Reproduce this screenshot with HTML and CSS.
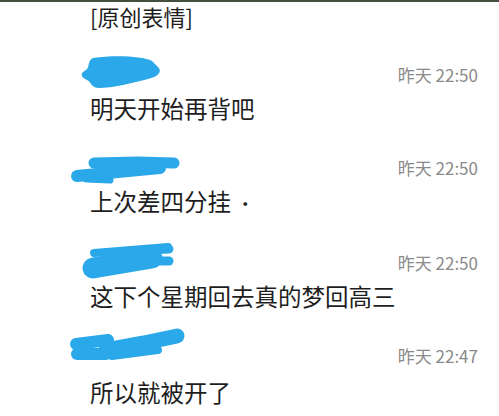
FILE: index.html
```html
<!DOCTYPE html>
<html lang="zh-CN">
<head>
    <meta charset="UTF-8">
    <meta name="viewport" content="width=device-width, initial-scale=1.0">
    <title>消息</title>
    <link rel="stylesheet" href="styles.css">
</head>
<body>
    <div class="screen">
        <div class="last-msg">[原创表情]</div>
        <ul class="chat-list">
            <li class="chat-item">
                <div class="chat-head">
                    <svg class="name-mask" viewBox="0 0 120 40" width="120" height="40">
                        <path d="M25,4 C45,1 75,2 84,7 L90,13 C95,18 89,23 80,25 C65,29 45,34 30,34 C22,33 24,28 19,26 C12,23 12,19 18,16 C22,13 19,7 25,4 Z"/>
                    </svg>
                    <span class="time">昨天 22:50</span>
                </div>
                <div class="msg">明天开始再背吧</div>
            </li>
            <li class="chat-item">
                <div class="chat-head">
                    <svg class="name-mask" viewBox="0 0 120 40" width="120" height="40">
                        <g class="stroke">
                            <path d="M26,16 L70,15 L106,16" stroke-width="11"/>
                            <path d="M9,29 L50,25 L92,21" stroke-width="12"/>
                            <path d="M18,32 L42,33" stroke-width="7"/>
                        </g>
                    </svg>
                    <span class="time">昨天 22:50</span>
                </div>
                <div class="msg">上次差四分挂 <span class="dot">·</span></div>
            </li>
            <li class="chat-item">
                <div class="chat-head">
                    <svg class="name-mask" viewBox="0 0 120 40" width="120" height="40">
                        <g class="stroke">
                            <path d="M25,26 L84,16" stroke-width="21"/>
                            <path d="M26,11 L100,5" stroke-width="8"/>
                            <path d="M78,8 L101,7" stroke-width="9"/>
                            <path d="M78,19 L101,19" stroke-width="9"/>
                        </g>
                    </svg>
                    <span class="time">昨天 22:50</span>
                </div>
                <div class="msg">这下个星期回去真的梦回高三</div>
            </li>
            <li class="chat-item">
                <div class="chat-head">
                    <svg class="name-mask" viewBox="0 0 120 40" width="120" height="40">
                        <g class="stroke">
                            <path d="M8,9 L40,5" stroke-width="12"/>
                            <path d="M9,19 L38,19" stroke-width="12"/>
                            <path d="M38,15 L76,8 L109,1" stroke-width="15"/>
                            <path d="M44,21 L90,15" stroke-width="8"/>
                        </g>
                    </svg>
                    <span class="time">昨天 22:47</span>
                </div>
                <div class="msg msg-low">所以就被开了</div>
            </li>
        </ul>
    </div>
</body>
</html>
```

FILE: styles.css
```css
body {
    margin: 0;
    background-color: #fff;
    font-family: "Noto Sans CJK SC", "Noto Sans", sans-serif;
    color: #1e1e1e;
}
.screen {
    border-top: 2px solid #44503f;
    height: 414px;
    overflow: hidden;
}
.last-msg {
    padding-left: 90px;
    font-size: 22px;
    line-height: 28px;
}
.chat-list {
    list-style: none;
    margin: 0;
    padding: 24px 0 0;
}
.chat-item {
    padding-bottom: 25px;
}
.chat-head {
    display: flex;
    align-items: center;
    justify-content: space-between;
    height: 40px;
    padding-right: 21px;
}
.name-mask {
    display: block;
    margin-left: 68px;
    overflow: visible;
    fill: #2ba8e9;
}
.name-mask .stroke {
    fill: none;
    stroke: #2ba8e9;
    stroke-linecap: round;
    stroke-linejoin: round;
}
.time {
    font-size: 17px;
    color: #8a8a8a;
}
.msg {
    padding-left: 90px;
    font-size: 23.5px;
    line-height: 28px;
}
.msg-low {
    padding-top: 3px;
}
.dot {
    font-size: 18px;
}
```
